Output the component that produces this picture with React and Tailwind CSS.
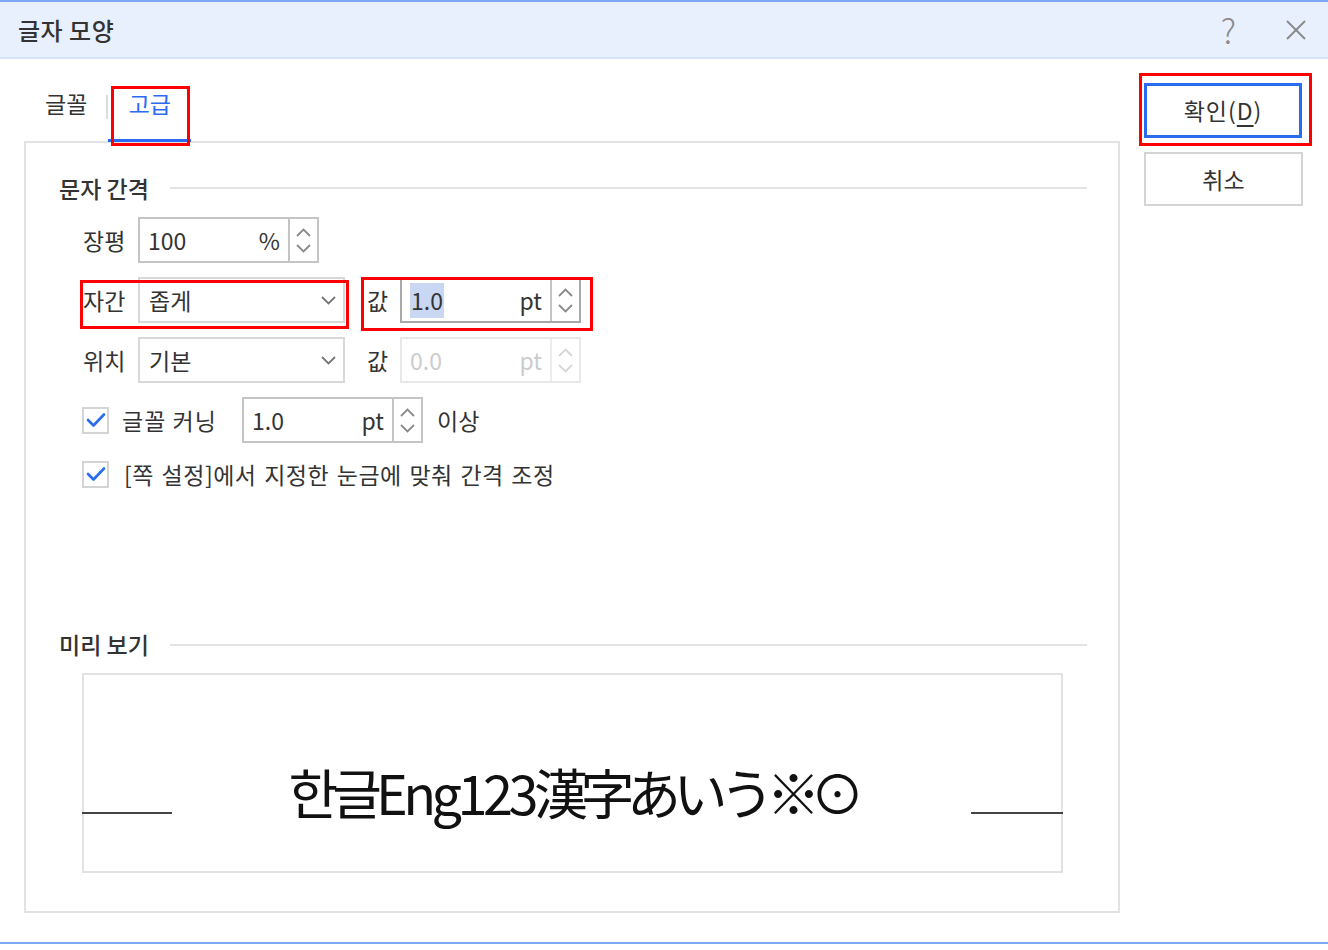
import React from 'react'

const FONT = { fontFamily: '"Noto Sans CJK KR", "Noto Sans", sans-serif' }

const Chevron = ({ up = false, className = '' }) => (
  <svg width="15" height="9" viewBox="0 0 15 9" fill="none" stroke="currentColor" strokeWidth="1.8" className={className}>
    {up ? <polyline points="1,8 7.5,1.5 14,8" /> : <polyline points="1,1 7.5,7.5 14,1" />}
  </svg>
)

const Spinner = ({ disabled }) => (
  <div className={`w-[29px] h-full flex flex-col items-center justify-center gap-[7px] border-l-2 ${disabled ? 'border-[#ececec] text-[#d6d6d6]' : 'border-[#c4c4c4] text-[#8a8a8a]'}`}>
    <Chevron up />
    <Chevron />
  </div>
)

const NumInput = ({ value, unit, width = 'w-[181px]', focused, disabled, selected }) => (
  <div className={`${width} h-[46px] flex items-center border-2 ${focused ? 'border-[#a9a9a9]' : disabled ? 'border-[#e8e8e8]' : 'border-[#c4c4c4]'} bg-white`}>
    <div className={`flex-1 flex items-center justify-between pl-[8px] pr-[8px] ${disabled ? 'text-[#cccccc]' : 'text-[#333]'}`}>
      <span className={selected ? 'bg-[#c9d7f2] px-[1px] leading-[35px]' : ''}>{value}</span>
      <span>{unit}</span>
    </div>
    <Spinner disabled={disabled} />
  </div>
)

const Select = ({ value }) => (
  <div className="w-[207px] h-[46px] flex items-center justify-between border-2 border-[#d8d8d8] pl-[9px] pr-[7px] text-[#333]">
    <span>{value}</span>
    <Chevron className="text-[#777]" />
  </div>
)

const Check = () => (
  <div className="w-[27px] h-[27px] border-2 border-[#d4d4d4] flex items-center justify-center">
    <svg width="20" height="16" viewBox="0 0 20 16" fill="none" stroke="#2a6cf0" strokeWidth="2.6" strokeLinecap="round" strokeLinejoin="round">
      <polyline points="2,8 7.5,13.5 18,2.5" />
    </svg>
  </div>
)

const SectionTitle = ({ children }) => (
  <div className="flex items-center gap-[21px] h-[30px]">
    <span className="font-medium text-[#333]">{children}</span>
    <div className="flex-1 h-[2px] bg-[#e4e4e4]" />
  </div>
)

export default function App() {
  return (
    <div className="relative w-[1328px] h-[950px] bg-white text-[23px] text-[#333] overflow-hidden" style={FONT}>
      {/* title bar */}
      <div className="h-[59px] border-t-2 border-b-2 border-t-[#7ba7f3] border-b-[#d6e3fb] bg-[#e8f0fe] flex items-center justify-between pl-[18px] pr-[22px]">
        <span className="text-[24px] font-medium text-[#333] leading-none tracking-[0.5px]">글자 모양</span>
        <div className="flex items-center gap-[50px] text-[#8a8a8a]">
          <span className="text-[34px] leading-none font-light">?</span>
          <svg width="20" height="20" viewBox="0 0 20 20" stroke="currentColor" strokeWidth="2">
            <line x1="1" y1="1" x2="19" y2="19" />
            <line x1="19" y1="1" x2="1" y2="19" />
          </svg>
        </div>
      </div>

      <div className="flex">
        {/* left side */}
        <div className="pl-[24px] w-[1120px]">
          {/* tabs */}
          <div className="h-[82px] flex items-end">
            <div className="flex items-center h-[82px] pl-[21px] text-[#333]">
              <span className="pt-[6px]">글꼴</span>
            </div>
            <div className="w-[2px] h-[24px] bg-[#dddddd] mb-[22px] ml-[19px]" />
            <div className="w-[83px] h-[82px] flex items-center justify-center border-b-[3px] border-[#2b6af2] text-[#2b6af2] relative top-[1px]">
              <span className="pt-[7px]">고급</span>
            </div>
          </div>

          {/* panel */}
          <div className="h-[772px] border-2 border-[#e2e2e2] pl-[33px] pr-[31px] pt-[30px]">
            <SectionTitle>문자 간격</SectionTitle>

            <div className="pl-[24px] mt-[14px] flex flex-col gap-[14px]">
              <div className="flex items-center">
                <span className="w-[55px]">장평</span>
                <NumInput value="100" unit="%" />
              </div>
              <div className="flex items-center">
                <span className="w-[55px]">자간</span>
                <Select value="좁게" />
                <span className="ml-[22px] w-[33px]">값</span>
                <NumInput value="1.0" unit="pt" focused selected />
              </div>
              <div className="flex items-center">
                <span className="w-[55px]">위치</span>
                <Select value="기본" />
                <span className="ml-[22px] w-[33px]">값</span>
                <NumInput value="0.0" unit="pt" disabled />
              </div>
              <div className="flex items-center -ml-[1px]">
                <Check />
                <span className="ml-[13px] w-[120px] tracking-[1px]">글꼴 커닝</span>
                <NumInput value="1.0" unit="pt" />
                <span className="ml-[14px]">이상</span>
              </div>
              <div className="flex items-center -ml-[1px]">
                <Check />
                <span className="ml-[15px] tracking-[0.5px] [word-spacing:2px]">[쪽 설정]에서 지정한 눈금에 맞춰 간격 조정</span>
              </div>
            </div>

            <div className="mt-[138px]">
              <SectionTitle>미리 보기</SectionTitle>
            </div>

            <div className="ml-[23px] mr-[24px] mt-[13px] h-[200px] border-2 border-[#e2e2e2] flex items-start">
              <div className="w-[90px] h-[2px] bg-[#444] mt-[137px] -ml-[2px]" />
              <div className="flex-1 flex justify-center pt-[90px]">
                <span className="text-[54px] leading-none text-[#111] whitespace-nowrap">
                  <span className="tracking-[-6px]">한글</span>
                  <span className="tracking-[-4.5px]">Eng123</span>
                  <span className="tracking-[-7.5px]">漢字あいう</span>
                  <span className="tracking-[-10px]">※⊙</span>
                </span>
              </div>
              <div className="w-[92px] h-[2px] bg-[#444] mt-[137px] -mr-[2px]" />
            </div>
          </div>
        </div>

        {/* buttons */}
        <div className="pl-[24px] pt-[24px] flex flex-col gap-[14px]">
          <div className="w-[158px] h-[55px] border-[3px] border-[#2a6cf0] flex items-center justify-center">
            <span className="tracking-[1px]">확인(<span className="underline underline-offset-[5px]">D</span>)</span>
          </div>
          <div className="w-[159px] h-[54px] border-2 border-[#d4d4d4] flex items-center justify-center">
            <span>취소</span>
          </div>
        </div>
      </div>

      {/* bottom line */}
      <div className="absolute left-0 right-0 top-[942px] h-[2px] bg-[#7ba7f3]" />

      {/* red annotation boxes */}
      <div className="absolute left-[111px] top-[86px] w-[79px] h-[60px] border-[3px] border-[#ff0000]" />
      <div className="absolute left-[80px] top-[280px] w-[269px] h-[49px] border-[3px] border-[#ff0000]" />
      <div className="absolute left-[361px] top-[277px] w-[232px] h-[54px] border-[3px] border-[#ff0000]" />
      <div className="absolute left-[1139px] top-[73px] w-[173px] h-[73px] border-[3px] border-[#ff0000]" />
    </div>
  )
}
